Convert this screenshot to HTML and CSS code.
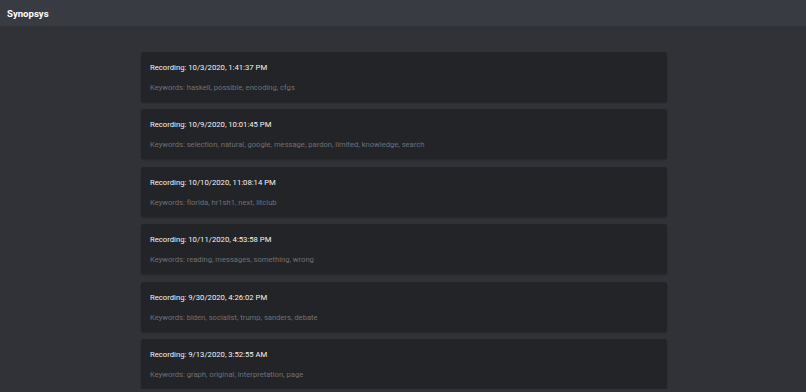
FILE: index.html
```html
<!DOCTYPE html>
<html>
<head>
<meta charset="utf-8">
<link rel="stylesheet" href="styles.css">
</head>
<body>
<header class="topbar"><span class="brand">Synopsys</span></header>
<main class="list">
  <div class="card"><div class="title">Recording: 10/3/2020, 1:41:37 PM</div><div class="keywords">Keywords: haskell, possible, encoding, cfgs</div></div>
  <div class="card"><div class="title">Recording: 10/9/2020, 10:01:45 PM</div><div class="keywords">Keywords: selection, natural, google, message, pardon, limited, knowledge, search</div></div>
  <div class="card"><div class="title">Recording: 10/10/2020, 11:08:14 PM</div><div class="keywords">Keywords: florida, hr1sh1, next, litclub</div></div>
  <div class="card"><div class="title">Recording: 10/11/2020, 4:53:58 PM</div><div class="keywords">Keywords: reading, messages, something, wrong</div></div>
  <div class="card"><div class="title">Recording: 9/30/2020, 4:26:02 PM</div><div class="keywords">Keywords: biden, socialist, trump, sanders, debate</div></div>
  <div class="card"><div class="title">Recording: 9/13/2020, 3:52:55 AM</div><div class="keywords">Keywords: graph, original, interpretation, page</div></div>
</main>
</body>
</html>
```
FILE: styles.css
```css
html, body {
  margin: 0;
  padding: 0;
  background: #313238;
  font-family: Roboto, "Liberation Sans", sans-serif;
  overflow: hidden;
}
.topbar {
  height: 26px;
  background: #393b43;
  display: flex;
  align-items: center;
  padding-left: 7px;
}
.brand {
  color: #ffffff;
  font-weight: bold;
  font-size: 9.6px;
}
.list {
  width: 526px;
  margin: 26px auto 0;
  padding-left: 2px;
  display: flex;
  flex-direction: column;
  gap: 7.4px;
}
.card {
  background: #232427;
  border-radius: 3px;
  height: 50px;
  box-sizing: border-box;
  padding: 8px 10px 0 9px;
  box-shadow: 0 1px 2px rgba(0,0,0,0.25);
}
.title {
  color: #f4f4f4;
  font-size: 7.7px;
  line-height: 16px;
}
.keywords {
  color: #6f7075;
  font-size: 7.6px;
  line-height: 16px;
  margin-top: 4px;
}
```
